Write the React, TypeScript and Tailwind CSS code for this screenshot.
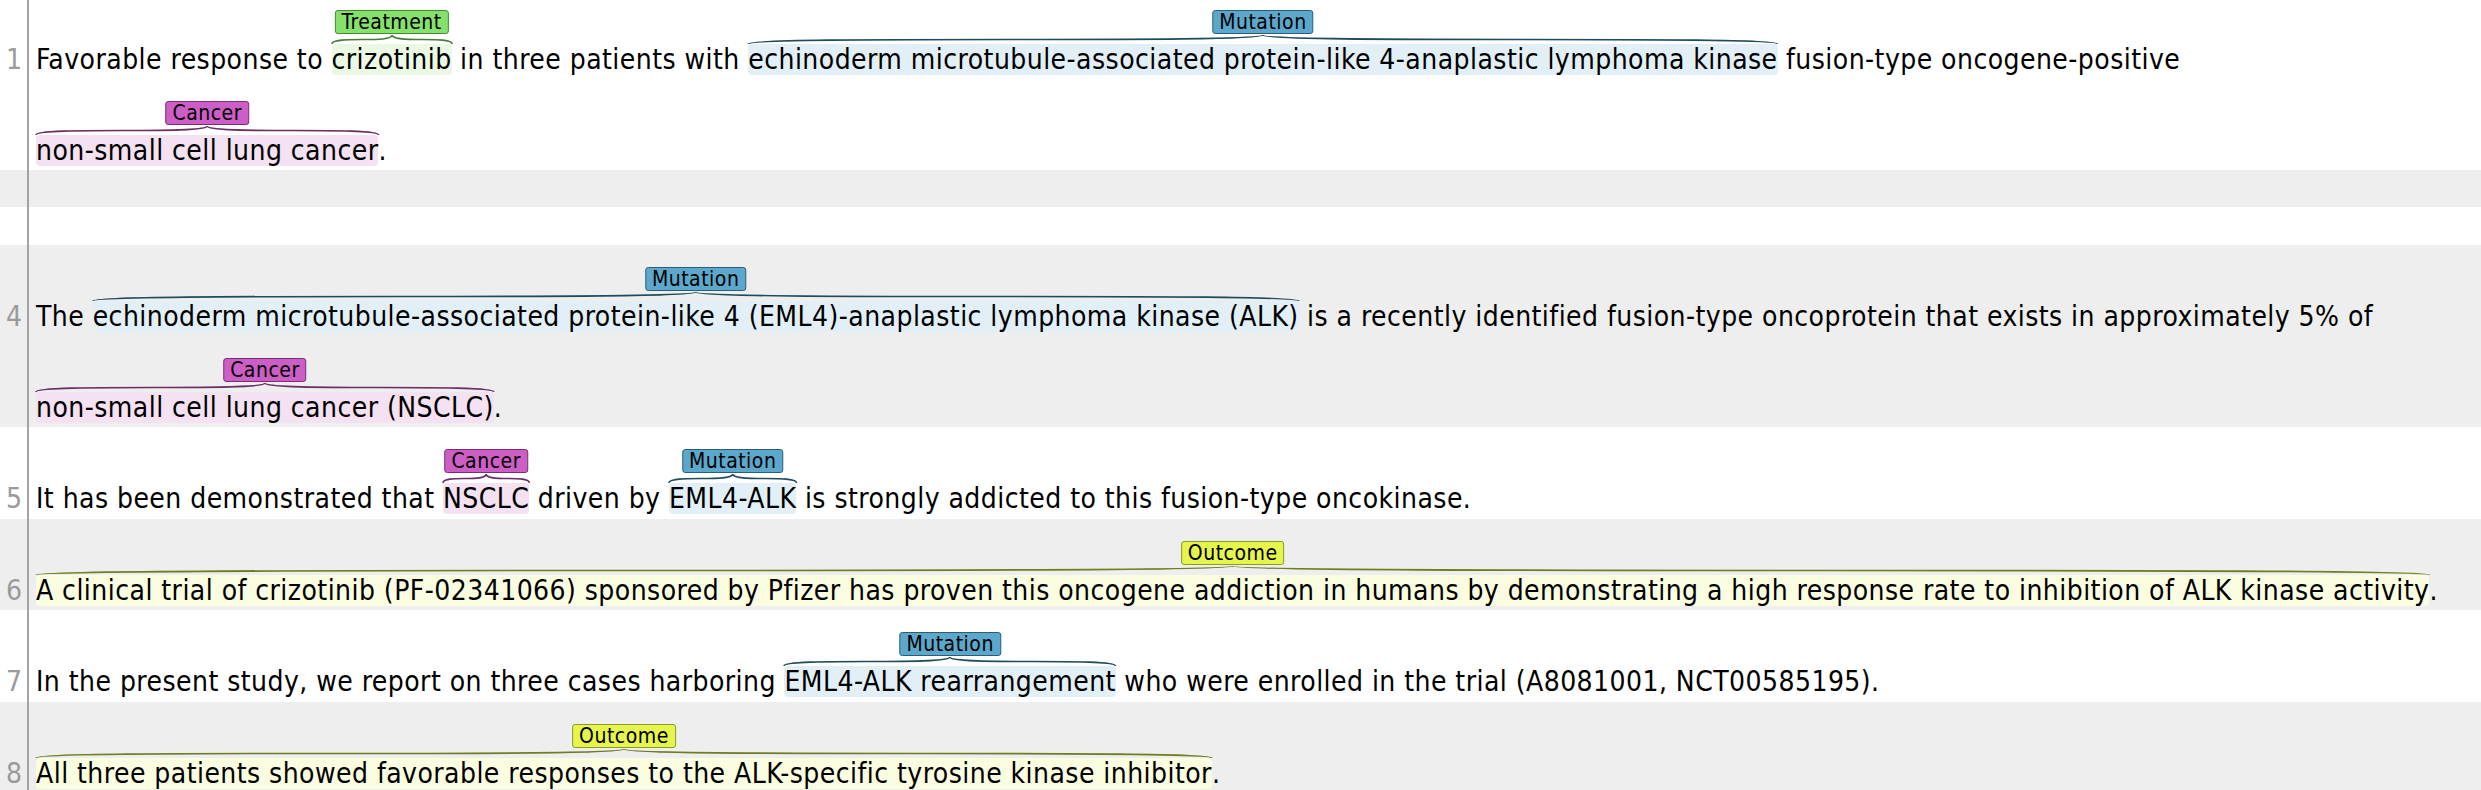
import React from "react";

type Kind = "Treatment" | "Mutation" | "Cancer" | "Outcome";

const kinds: Record<Kind, { label: string; span: string; brace: string }> = {
  Treatment: { label: "bg-[#86e06c] border-[#3f8a2e]", span: "bg-[#eaf8e4]", brace: "#457d35" },
  Mutation: { label: "bg-[#5ba8cc] border-[#2b5d75]", span: "bg-[#e2eff6]", brace: "#1f4b5f" },
  Cancer: { label: "bg-[#cd5ec6] border-[#7a2d73]", span: "bg-[#f4e1f1]", brace: "#6a2d66" },
  Outcome: { label: "bg-[#e6f54c] border-[#8a9a25]", span: "bg-[#fafde0]", brace: "#6e7d1e" },
};

type Piece = string | { kind: Kind; text: string };

const Ann = ({ kind, text }: { kind: Kind; text: string }) => {
  const s = kinds[kind];
  return (
    <span className={`relative inline-block h-[31px] leading-[31px] rounded-[4px] ${s.span}`}>
      <svg
        className="absolute left-0 bottom-full w-full h-[9px] overflow-visible"
        viewBox="0 0 100 10"
        preserveAspectRatio="none"
      >
        <path
          d="M0,10 C0,0 50,10 50,0 C50,10 100,0 100,10"
          fill="none"
          stroke={s.brace}
          strokeWidth={1.6}
          vectorEffect="non-scaling-stroke"
        />
      </svg>
      <span
        className={`absolute left-1/2 -translate-x-1/2 bottom-[calc(100%+10px)] h-[24px] px-[6px] border rounded-[3px] text-[21px] leading-[22px] tracking-[0.5px] text-black whitespace-nowrap ${s.label}`}
      >
        {kind}
      </span>
      {text}
    </span>
  );
};

const Line = ({ pieces }: { pieces: Piece[] }) => (
  <div className="h-[91px] pb-[3px] flex items-end">
    <div className="leading-[32px] whitespace-pre">
      {pieces.map((p, i) =>
        typeof p === "string" ? <span key={i}>{p}</span> : <Ann key={i} kind={p.kind} text={p.text} />
      )}
    </div>
  </div>
);

type Row = { num?: number; h: string; bg: string; lines: Piece[][] };

const rows: Row[] = [
  {
    num: 1,
    h: "h-[182px] -mt-[12px]",
    bg: "bg-white",
    lines: [
      [
        "Favorable response to ",
        { kind: "Treatment", text: "crizotinib" },
        " in three patients with ",
        { kind: "Mutation", text: "echinoderm microtubule-associated protein-like 4-anaplastic lymphoma kinase" },
        " fusion-type oncogene-positive",
      ],
      [{ kind: "Cancer", text: "non-small cell lung cancer" }, "."],
    ],
  },
  { h: "h-[37px]", bg: "bg-[#eeeeee]", lines: [] },
  { h: "h-[38px]", bg: "bg-white", lines: [] },
  {
    num: 4,
    h: "h-[182px]",
    bg: "bg-[#eeeeee]",
    lines: [
      [
        "The ",
        { kind: "Mutation", text: "echinoderm microtubule-associated protein-like 4 (EML4)-anaplastic lymphoma kinase (ALK)" },
        " is a recently identified fusion-type oncoprotein that exists in approximately 5% of",
      ],
      [{ kind: "Cancer", text: "non-small cell lung cancer (NSCLC)" }, "."],
    ],
  },
  {
    num: 5,
    h: "h-[92px]",
    bg: "bg-white",
    lines: [
      [
        "It has been demonstrated that ",
        { kind: "Cancer", text: "NSCLC" },
        " driven by ",
        { kind: "Mutation", text: "EML4-ALK" },
        " is strongly addicted to this fusion-type oncokinase.",
      ],
    ],
  },
  {
    num: 6,
    h: "h-[91px]",
    bg: "bg-[#eeeeee]",
    lines: [
      [
        {
          kind: "Outcome",
          text: "A clinical trial of crizotinib (PF-02341066) sponsored by Pfizer has proven this oncogene addiction in humans by demonstrating a high response rate to inhibition of ALK kinase activity",
        },
        ".",
      ],
    ],
  },
  {
    num: 7,
    h: "h-[92px]",
    bg: "bg-white",
    lines: [
      [
        "In the present study, we report on three cases harboring ",
        { kind: "Mutation", text: "EML4-ALK rearrangement" },
        " who were enrolled in the trial (A8081001, NCT00585195).",
      ],
    ],
  },
  {
    num: 8,
    h: "h-[92px]",
    bg: "bg-[#eeeeee]",
    lines: [
      [{ kind: "Outcome", text: "All three patients showed favorable responses to the ALK-specific tyrosine kinase inhibitor" }, "."],
    ],
  },
];

export default function App() {
  return (
    <div className="w-[2481px] h-[790px] overflow-hidden bg-white text-black text-[28px] tracking-[0.45px] font-['DejaVu_Sans_Condensed','DejaVu_Sans',sans-serif]">
      {rows.map((r, i) => (
        <div key={i} className={`flex shrink-0 ${r.h} ${r.bg}`}>
          <div className="w-[29px] shrink-0 border-r-2 border-[#a3a3a3] pr-[5px] text-right text-[#9a9a9a] tracking-normal">
            {r.num && (
              <div className="h-[91px] pb-[3px] flex items-end justify-end">
                <div className="leading-[32px]">{r.num}</div>
              </div>
            )}
          </div>
          <div className="pl-[7px]">
            {r.lines.map((l, j) => (
              <Line key={j} pieces={l} />
            ))}
          </div>
        </div>
      ))}
    </div>
  );
}
